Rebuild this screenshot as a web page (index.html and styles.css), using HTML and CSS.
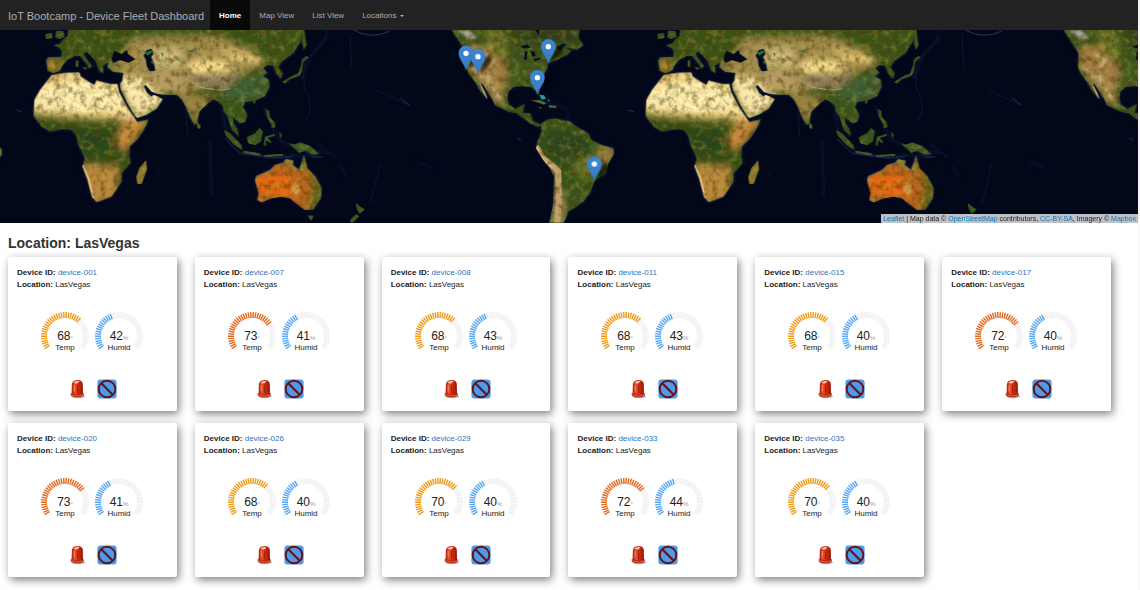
FILE: index.html
```
<!DOCTYPE html>
<html lang="en">
<head>
  <meta charset="UTF-8">
  <meta name="viewport" content="width=device-width, initial-scale=1.0">
  <title>IoT Bootcamp - Device Fleet Dashboard</title>
  <link rel="stylesheet" href="styles.css">
</head>
<body>
  <nav class="navbar">
    <a class="navbar-brand" href="#">IoT Bootcamp - Device Fleet Dashboard</a>
    <ul class="nav">
      <li><a class="active" href="#">Home</a></li>
      <li><a href="#map">Map View</a></li>
      <li><a href="#list">List View</a></li>
      <li><a href="#locations">Locations <span class="caret"></span></a></li>
    </ul>
  </nav>

  <div class="map" id="map">
    <svg class="map-tiles" viewBox="0 0 3414 579" preserveAspectRatio="xMidYMid slice" role="img" aria-label="Device locations">
      <defs>
        <filter id="soft" x="-50%" y="-50%" width="200%" height="200%"><feGaussianBlur stdDeviation="11"/></filter>
        <filter id="shade" x="-50%" y="-50%" width="200%" height="200%"><feGaussianBlur stdDeviation="5"/></filter>
        <!-- mottled terrain -->
        <filter id="terrain" x="0" y="0" width="100%" height="100%" color-interpolation-filters="sRGB">
          <feTurbulence type="fractalNoise" baseFrequency="0.05" numOctaves="5" seed="4" result="noise"/>
          <feColorMatrix in="noise" type="matrix" values="0 0 0 0 0.3  0 0 0 0 0.22  0 0 0 0 0.04  1.6 0 0 0 -0.72" result="dark"/>
          <feColorMatrix in="noise" type="matrix" values="0 0 0 0 0.7  0 0 0 0 0.68  0 0 0 0 0.28  0 1 0 0 -0.47" result="light"/>
          <feComposite in="dark" in2="SourceGraphic" operator="in" result="darkSpots"/>
          <feComposite in="light" in2="SourceGraphic" operator="in" result="lightSpots"/>
          <feMerge><feMergeNode in="SourceGraphic"/><feMergeNode in="darkSpots"/><feMergeNode in="lightSpots"/></feMerge>
        </filter>
        <linearGradient id="pinFill" x1="0" y1="0" x2="0" y2="1">
          <stop offset="0" stop-color="#3f86d0"/>
          <stop offset="1" stop-color="#3a7cc6"/>
        </linearGradient>

        <path id="asiaShape" d="M205 0 L203 18 190 28 182 40 163 46 178 54 186 64 184 80 145 82 139 90 143 122 160 130 180 122 188 105 205 88 225 78 240 78 262 105 266 116 276 108 254 78 251 68 262 66 286 92 297 122 310 130 308 108 325 97 322 112 340 126 370 128 368 150 360 162 363 180 385 225 405 258 412 264 440 254 470 236 488 208 470 198 460 195 455 200 440 188 430 168 437 165 455 185 475 192 500 194 530 195 545 208 558 230 570 262 583 285 592 278 597 245 625 218 640 208 655 215 668 228 672 245 684 262 696 300 716 318 712 298 700 280 700 262 720 280 735 275 742 255 728 232 735 215 765 212 795 198 808 172 806 150 790 138 802 128 790 115 802 105 820 108 828 130 842 146 848 130 835 112 845 95 880 70 905 30 905 0Z"/>
        <path id="africaShape" d="M155 135 L200 128 238 127 242 140 265 155 283 165 290 152 330 162 352 162 357 185 380 230 404 264 412 276 446 268 440 285 415 325 390 350 388 375 392 400 365 430 365 455 335 500 290 517 275 500 262 450 247 410 255 385 235 345 230 318 215 300 190 297 150 305 125 290 105 265 100 255 103 210 120 180 140 155Z"/>
        <path id="australiaShape" d="M765 450 L770 438 810 420 825 405 850 398 858 388 880 392 878 405 897 419 905 400 912 378 922 415 945 438 965 475 962 505 940 538 915 540 895 525 882 515 870 505 845 500 815 505 785 517 772 510 776 490Z"/>
        <path id="northShape" d="M455 0 L480 40 500 70 498 110 505 130 525 155 540 182 562 207 556 190 538 155 550 165 575 205 585 225 625 245 650 250 690 280 715 292 724 284 700 274 690 250 668 248 674 222 645 237 626 222 622 205 625 185 640 172 665 168 690 170 705 180 716 197 719 180 712 160 740 120 745 100 770 90 800 75 815 62 795 52 830 60 850 45 835 25 838 0Z"/>
        <path id="southShape" d="M722 283 L740 270 760 265 810 275 830 290 865 310 875 330 905 345 940 355 942 372 925 400 918 430 885 450 870 490 850 515 830 530 805 545 800 560 790 579 748 579 760 520 762 440 750 415 730 390 708 355 712 335 725 305Z"/>
        <clipPath id="asia"><use href="#asiaShape"/></clipPath>
        <clipPath id="africa"><use href="#africaShape"/></clipPath>
        <clipPath id="australia"><use href="#australiaShape"/></clipPath>
        <clipPath id="north"><use href="#northShape"/></clipPath>
        <clipPath id="south"><use href="#southShape"/></clipPath>

        <g id="world">
          <!-- shallow water and ridges -->
          <g fill="none" stroke="#13244a" stroke-linejoin="round" stroke-width="6" opacity=".55" filter="url(#shade)">
            <use href="#asiaShape"/><use href="#africaShape"/><use href="#australiaShape"/>
            <path d="M665 240 L680 310 725 365 800 380 880 375 960 380M790 230 L835 330 880 350 985 370M985 20 L930 80 905 150M630 330 L635 500"/>
          </g>
          <path d="M983 0 Q970 50 920 85 Q905 120 915 180 Q945 220 920 270M1050 15 L1055 110M1140 400 Q1130 450 1110 520M1130 180 L1225 225M555 215 L563 320M468 435 L482 425" fill="none" stroke="#0d1830" stroke-width="3"/>

          <g filter="url(#terrain)">
            <g clip-path="url(#asia)">
              <rect x="130" width="790" height="330" fill="#3b5216"/>
              <g filter="url(#soft)">
                <path d="M395 20 L650 15 760 60 800 105 730 130 640 165 560 190 400 175 340 110Z" fill="#a08a4e"/>
                <path d="M440 60 L540 55 550 110 470 110Z" fill="#d3bf80"/>
                <path d="M350 140 L430 145 500 210 410 275 360 180Z" fill="#fbe3a0"/>
                <path d="M450 130 L540 120 560 190 470 190Z" fill="#b79c64"/>
                <path d="M550 100 L620 85 700 100 690 125 600 130Z" fill="#edcf82"/>
                <path d="M640 45 L780 75 790 95 700 90Z" fill="#d8b867"/>
                <path d="M555 130 L700 130 740 160 690 180 600 165Z" fill="#988264"/>
                <path d="M530 185 L640 200 590 280 550 240Z" fill="#998344"/>
                <path d="M720 140 L820 135 805 200 730 215 650 190Z" fill="#3d6135"/>
                <ellipse cx="160" cy="106" rx="24" ry="20" fill="#b98735"/>
                <path d="M320 102 L425 105 430 130 330 125Z" fill="#a98e4c"/>
                <path d="M650 205 L750 215 730 290 690 300Z" fill="#38561e"/>
              </g>
              <path d="M365 140 L425 150 445 188 475 205 445 238 410 248Z" fill="#fdeaaf" filter="url(#shade)"/>
              <path d="M568 105 L610 92 690 105 685 120 620 122 580 128Z" fill="#f7dd91" filter="url(#shade)"/>
              <path d="M700 72 L780 84 770 98 690 88Z" fill="#e3c678" filter="url(#shade)"/>
              <path d="M555 145 L600 172 660 181 690 176" fill="none" stroke="#a9a496" stroke-width="3"/>
            </g>
            <g clip-path="url(#africa)">
              <rect x="90" y="120" width="360" height="400" fill="#314b16"/>
              <g filter="url(#soft)">
                <path d="M80 100 H400 L420 265 340 270 260 258 90 247Z" fill="#fce29a"/>
                <path d="M130 125 H230 L150 155Z" fill="#c09247"/>
                <path d="M375 265 L450 265 400 335 365 370 345 330Z" fill="#cb873c"/>
                <path d="M240 400 L360 405 350 510 270 530Z" fill="#bd873c"/>
                <path d="M235 310 H325 L330 350 260 355Z" fill="#25441c"/>
                <path d="M100 245 L380 262 370 278 110 263Z" fill="#a4913d"/>
              </g>
              <path d="M120 185 L235 155 345 185 375 235 250 245 115 228Z" fill="#ffefb4" filter="url(#shade)"/>
              <path d="M248 405 L265 445 280 505" fill="none" stroke="#efd39d" stroke-width="5"/>
              <path d="M345 172 L357 205" fill="none" stroke="#777b36" stroke-width="2"/>
            </g>
            <g clip-path="url(#australia)">
              <rect x="755" y="370" width="220" height="180" fill="#b8651c"/>
              <g filter="url(#soft)">
                <path d="M765 440 L870 420 890 475 865 500 770 490Z" fill="#e8660f"/>
                <path d="M820 385 H925 L935 420 870 410Z" fill="#7b7b28"/>
                <path d="M925 410 L980 470 965 540 925 550 940 480Z" fill="#58631e"/>
                <path d="M768 505 L800 505 785 530Z" fill="#8c7b2e"/>
              </g>
              <ellipse cx="887" cy="477" rx="10" ry="15" fill="#eebb63" filter="url(#shade)"/>
            </g>
            <path d="M412 462 L409 440 418 415 438 391 441 418 425 461Z" fill="#8e7a2d"/>
            <g fill="#385720">
              <path d="M168 2 L190 3 194 20 178 28 166 22ZM136 12 L155 8 158 24 138 27Z"/>
              <path d="M847 155 L875 138 895 130 903 105 906 88 918 78 926 82 910 96 906 122 898 138 870 148 855 161ZM903 0 L913 0 920 45 912 60 906 40Z"/>
              <path d="M672 300 L690 310 725 346 727 360 700 342 678 318ZM728 362 L780 370 780 377 732 369ZM790 375 L850 372 848 378 795 381Z"/>
              <path d="M740 322 L765 310 778 294 789 305 782 335 765 346 745 340Z"/>
              <path d="M795 320 L822 312 824 318 802 324 814 336 811 340 799 331 797 348 791 344ZM797 236 L808 243 809 260 823 275 827 292 815 295 814 282 801 260ZM838 305 L845 315 841 329Z"/>
              <path d="M865 338 L880 344 900 337 930 347 959 373 940 374 917 362 897 369 881 353Z"/>
              <path d="M590 275 L601 286 600 297 592 294ZM922 556 L941 557 933 574ZM758 214 L768 215 760 222Z"/>
              <path d="M1068 520 L1082 531 1094 538 1080 552 1072 541ZM1068 553 L1077 558 1061 576 1052 579 1050 570Z"/>
            </g>
          </g>
          <g fill="#03081a">
            <path d="M334 88 L342 62 365 72 380 60 384 72 406 88 385 98 360 90 340 99Z"/>
            <path d="M441 60 L455 57 460 72 453 82 462 101 466 122 450 124 440 108 438 90 431 77Z"/>
          </g>
          <path d="M435 68 L453 60 456 68 441 77ZM452 92 L461 97 456 104ZM483 68 L490 70 488 82ZM562 64 L582 58 578 66Z" fill="#14754b"/>
          <path d="M765 450 L770 438 810 420 825 405 850 398 858 388 880 392 878 405 897 419 905 400 912 378M675 325 L720 370 830 384 880 379M910 360 L942 380 970 381" fill="none" stroke="#336598" stroke-width="3" opacity=".5"/>
          <path d="M228 90 L235 92 234 113 227 108ZM247 112 L262 113 256 120Z" fill="#505c1d"/>

          <g transform="translate(900 0)">
            <g fill="none" stroke="#13244a" stroke-width="6" opacity=".55" filter="url(#shade)">
              <use href="#northShape"/><use href="#southShape"/>
              <path d="M710 205 L800 235 808 275M50 340 L90 370 110 385M120 405 L140 445M350 395 L400 415"/>
            </g>
            <path d="M160 0 Q215 30 270 3M300 203 L328 226M652 325 L663 331M985 240 L1000 245" fill="none" stroke="#2c3a57" stroke-width="3"/>
            <g filter="url(#terrain)">
              <g clip-path="url(#north)">
                <rect x="440" width="420" height="300" fill="#39501a"/>
                <g filter="url(#soft)">
                  <path d="M500 45 L590 50 625 120 620 175 560 160 500 115Z" fill="#a57d42"/>
                  <path d="M545 0 L610 0 630 80 580 85Z" fill="#6c7527"/>
                  <path d="M520 135 L600 150 615 225 590 225Z" fill="#aa8951"/>
                  <path d="M640 0 H840 V35 H680Z" fill="#293b1c"/>
                  <path d="M630 95 H720 V165 H635Z" fill="#3e5a1c"/>
                </g>
                <path d="M470 0 L495 20 520 30 530 22 505 0Z" fill="#a6a6a0" filter="url(#shade)"/>
                <path d="M515 115 L545 140 560 130 575 180 605 205M550 70 L580 90 565 112" fill="none" stroke="#dbc28a" stroke-width="7" filter="url(#shade)"/>
                <path d="M540 158 L562 207" stroke="#e0c79a" stroke-width="5"/>
              </g>
              <g clip-path="url(#south)">
                <rect x="700" y="255" width="260" height="330" fill="#385419"/>
                <g filter="url(#soft)">
                  <path d="M730 305 L850 300 880 360 800 405 740 370Z" fill="#29441b"/>
                  <path d="M890 350 L945 350 925 410 890 400Z" fill="#a18343"/>
                  <path d="M820 390 L890 380 900 425 840 450Z" fill="#6d742c"/>
                  <path d="M765 480 L795 480 795 579 750 579Z" fill="#9c8b60"/>
                </g>
                <path d="M708 350 L728 385 755 405 775 425 776 490 772 585" fill="none" stroke="#c5a06c" stroke-width="18"/>
                <path d="M708 350 L732 392 758 415" fill="none" stroke="#e8cf9e" stroke-width="5"/>
              </g>
            </g>
            <path d="M660 50 L680 43 692 53 675 55ZM674 65 L683 64 680 90 672 88ZM690 62 L704 65 707 77 697 80ZM700 88 L722 82 720 88 704 94ZM705 0 L718 0 716 16ZM770 52 L792 40 798 44 779 62Z" fill="#061024"/>
            <path d="M692 211 L720 210 740 220 732 224 708 216ZM745 225 L768 227 770 234 748 233ZM715 231 L728 233 720 236Z" fill="#4c672c"/>
            <path d="M718 194 L732 196 738 206 725 209ZM742 207 L750 211 746 215Z" fill="#2996a5"/>
          </g>
        </g>

        <g id="pin">
          <path d="M4 0 L22 -50 Q48 -58 42 -38 Q36 -20 4 0Z" fill="#000" opacity=".65" filter="url(#shade)"/>
          <path d="M0 0 C-5 -18 -22 -32 -22 -51 A22 22 0 0 1 22 -51 C22 -32 5 -18 0 0Z" fill="url(#pinFill)" stroke="#2e6cae" stroke-width="1"/>
          <circle cy="-50" r="8" fill="#fff"/>
        </g>
      </defs>
      <rect width="3414" height="579" fill="#02071a"/>
      <use href="#world" x="-1836"/>
      <use href="#world"/>
      <use href="#world" x="1836"/>
      <use href="#pin" x="1398" y="120"/>
      <use href="#pin" x="1434" y="130"/>
      <use href="#pin" x="1645" y="100"/>
      <use href="#pin" x="1612" y="193"/>
      <use href="#pin" x="1783" y="452"/>
    </svg>
    <div class="map-attribution">
      <a href="#">Leaflet</a> | Map data © <a href="#">OpenStreetMap</a> contributors, <a href="#">CC-BY-SA</a>, Imagery © <a href="#">Mapbox</a>
    </div>
  </div>

  <main class="content">
    <h1>Location: LasVegas</h1>
    <div class="devices" id="devices"></div>
  </main>

  <svg class="sprite" aria-hidden="true">
    <defs>
      <linearGradient id="sirenFill">
        <stop offset="0" stop-color="#a81c09"/>
        <stop offset=".3" stop-color="#e8502c"/>
        <stop offset=".6" stop-color="#cf2b0c"/>
        <stop offset="1" stop-color="#8f1606"/>
      </linearGradient>
    </defs>
    <symbol id="siren" viewBox="0 0 20 20">
      <ellipse cx="11.5" cy="17.6" rx="7" ry="1.6" fill="#c4c4c4"/>
      <path d="M3.5 14.6 Q10.5 12 17 14.6 L16.6 17 Q10.5 20 4 17Z" fill="#b3260e"/>
      <path d="M4 15.8 Q10.5 18.6 16.6 15.8" fill="none" stroke="#e2866b" stroke-width=".7"/>
      <path d="M4.6 14.4 L4.9 5 Q5.6 1 10.5 1 T15.8 5 L16 14.4 Q10.5 16.6 4.6 14.4Z" fill="url(#sirenFill)"/>
      <path d="M6.4 4 Q8.5 1.6 12.6 2.2 L10 4.4Z" fill="#f9cdbd"/>
      <path d="M7.2 6 V12.5" stroke="#f4906e" stroke-width="1"/>
      <path d="M10.6 6 V14" stroke="#a01f0a" stroke-width="1"/>
    </symbol>
    <symbol id="ban" viewBox="0 0 20 20">
      <rect x=".4" y=".4" width="19.2" height="19.2" rx="3" fill="#4d9bea"/>
      <circle cx="10" cy="10" r="8.3" fill="none" stroke="#65141b" stroke-width="2"/>
      <path d="M4.3 4.3 L15.7 15.7" stroke="#65141b" stroke-width="2.2"/>
    </symbol>
  </svg>

  <script>
    const devices = [
      { id: 'device-001', temp: 68, humid: 42 },
      { id: 'device-007', temp: 73, humid: 41 },
      { id: 'device-008', temp: 68, humid: 43 },
      { id: 'device-011', temp: 68, humid: 43 },
      { id: 'device-015', temp: 68, humid: 40 },
      { id: 'device-017', temp: 72, humid: 40 },
      { id: 'device-020', temp: 73, humid: 41 },
      { id: 'device-026', temp: 68, humid: 40 },
      { id: 'device-029', temp: 70, humid: 40 },
      { id: 'device-033', temp: 72, humid: 44 },
      { id: 'device-035', temp: 70, humid: 40 }
    ];

    // 40 ticks over 250 degrees, one tick for every 2.5 units
    function gauge(value, unit, label, type) {
      let ticks = '';
      for (let i = 0; i < 40; i++) {
        const angle = -125 + (i + 0.5) * 6.25;
        const cls = i < Math.round(value / 2.5) ? 'tick on' : 'tick';
        ticks += `<line class="${cls}" y1="-24" y2="-18" transform="rotate(${angle})"/>`;
      }
      return `
        <svg class="gauge ${type}" viewBox="-27 -27 54 54">
          ${ticks}
          <text class="gauge-value" y="4">${value}<tspan class="gauge-unit">${unit}</tspan></text>
          <text class="gauge-label" y="14">${label}</text>
        </svg>`;
    }

    function card(device) {
      return `
        <section class="card">
          <p><b>Device ID:</b> <a href="#${device.id}">${device.id}</a></p>
          <p><b>Location:</b> LasVegas</p>
          <div class="gauges">
            ${gauge(device.temp, '°', 'Temp', device.temp > 70 ? 'hot' : 'warm')}
            ${gauge(device.humid, '%', 'Humid', 'humid')}
          </div>
          <div class="actions">
            <button type="button" aria-label="Sound alarm"><svg><use href="#siren"/></svg></button>
            <button type="button" aria-label="Disable device"><svg><use href="#ban"/></svg></button>
          </div>
        </section>`;
    }

    document.getElementById('devices').innerHTML = devices.map(card).join('');
  </script>
</body>
</html>
```
FILE: styles.css
```
* {
  margin: 0;
  padding: 0;
  box-sizing: border-box;
}

body {
  font-family: "Helvetica Neue", "Liberation Sans", Arial, sans-serif;
  font-size: 8px;
  line-height: 12px;
  color: #222;
  background: #fff;
  border-right: 2px solid #f7f7f7;
  min-height: 100vh;
}

a {
  color: #337ab7;
  text-decoration: none;
}

.navbar {
  display: flex;
  align-items: stretch;
  height: 30px;
  padding-left: 8px;
  background: #222;
}

.navbar a {
  display: flex;
  align-items: center;
  color: #adadad;
}

.navbar .navbar-brand {
  padding: 1px 6px 0 0;
  font-size: 11px;
}

.nav {
  display: flex;
  list-style: none;
}

.nav a {
  height: 100%;
  padding: 1px 9px 0;
}

.navbar .active {
  color: #fff;
  font-weight: bold;
  background: #080808;
}

.caret {
  margin-left: 4px;
  border-top: 2px solid;
  border-left: 2px solid transparent;
  border-right: 2px solid transparent;
}

.map {
  position: relative;
  height: 193px;
  background: #02071a;
}

.map-tiles {
  display: block;
  width: 100%;
  height: 100%;
}

.map-attribution {
  position: absolute;
  right: 0;
  bottom: 0;
  padding: 0 2px;
  font-size: 7px;
  line-height: 9px;
  background: rgba(255, 255, 255, 0.75);
}

.map-attribution a {
  color: #0078c0;
}

.content {
  padding: 10px 27px 12px 8px;
}

h1 {
  font-size: 14px;
  line-height: 20px;
  margin-bottom: 4px;
  color: #333;
}

.devices {
  display: grid;
  grid-template-columns: repeat(6, 1fr);
  gap: 12px 18px;
}

.card {
  padding: 10px 9px 12px;
  background: #fff;
  border-radius: 2px;
  box-shadow: 2px 3px 9px rgba(0, 0, 0, 0.5);
}

.card a {
  color: #2b72c4;
}

.gauges {
  display: flex;
  justify-content: center;
  margin-top: 18px;
  padding-right: 1px;
}

.gauge {
  width: 54px;
  height: 54px;
}

.gauge text {
  fill: #222;
  text-anchor: middle;
}

.gauge .gauge-value {
  font-size: 12px;
}

.gauge .gauge-unit {
  font-size: 6px;
  fill: #999;
}

.tick {
  stroke: #eee;
  stroke-width: 1.4;
}

.warm .on {
  stroke: #ee9a18;
}

.hot .on {
  stroke: #e2661c;
}

.humid .on {
  stroke: #55a5f2;
}

.actions {
  display: flex;
  justify-content: center;
  gap: 10px;
  margin-top: 16px;
}

.actions button {
  width: 20px;
  height: 20px;
  border: none;
  background: none;
  cursor: pointer;
}

.actions svg {
  display: block;
  width: 20px;
  height: 20px;
}

.sprite {
  position: absolute;
  width: 0;
  height: 0;
}
```
